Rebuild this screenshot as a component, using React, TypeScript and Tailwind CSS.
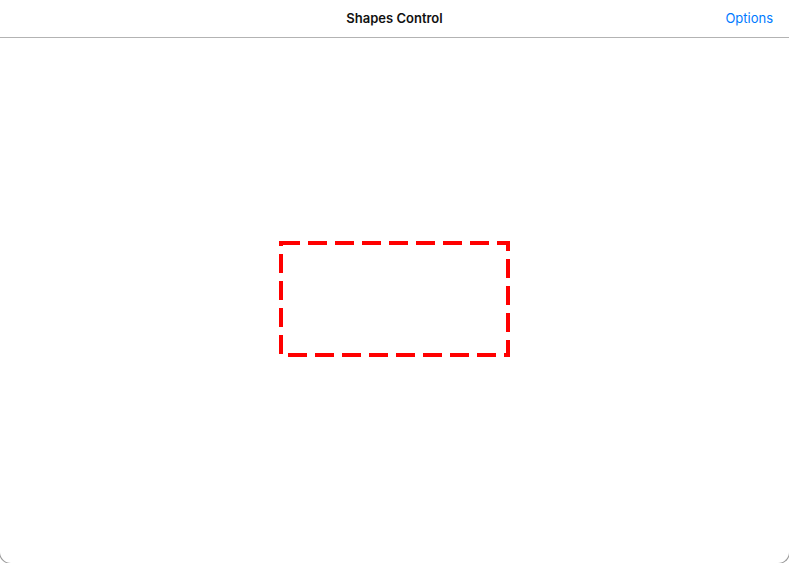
export default function App() {
  return (
    <div className="h-[563px] w-[789px] overflow-hidden bg-white">
      <div className="-ml-px flex h-[564px] w-[791px] flex-col rounded-b-[12px] border border-t-0 border-[#9a9a9a] bg-white font-['Inter',sans-serif]">
        <header className="flex h-[38px] shrink-0 items-center border-b border-[#b3b3b3] px-4">
          <div className="flex-1" />
          <h1 className="text-[13px] font-semibold text-[#111]">Shapes Control</h1>
          <div className="flex flex-1 justify-end">
            <button type="button" className="text-[13px] text-[#007aff]">
              Options
            </button>
          </div>
        </header>

        <main className="flex flex-1 items-center justify-center pb-[3px]">
          <svg width="232" height="116" viewBox="0 0 232 116">
            <rect
              x="2"
              y="2"
              width="227"
              height="112"
              fill="none"
              stroke="#ff0000"
              strokeWidth="4"
              strokeDasharray="19 8"
            />
          </svg>
        </main>
      </div>
    </div>
  );
}
